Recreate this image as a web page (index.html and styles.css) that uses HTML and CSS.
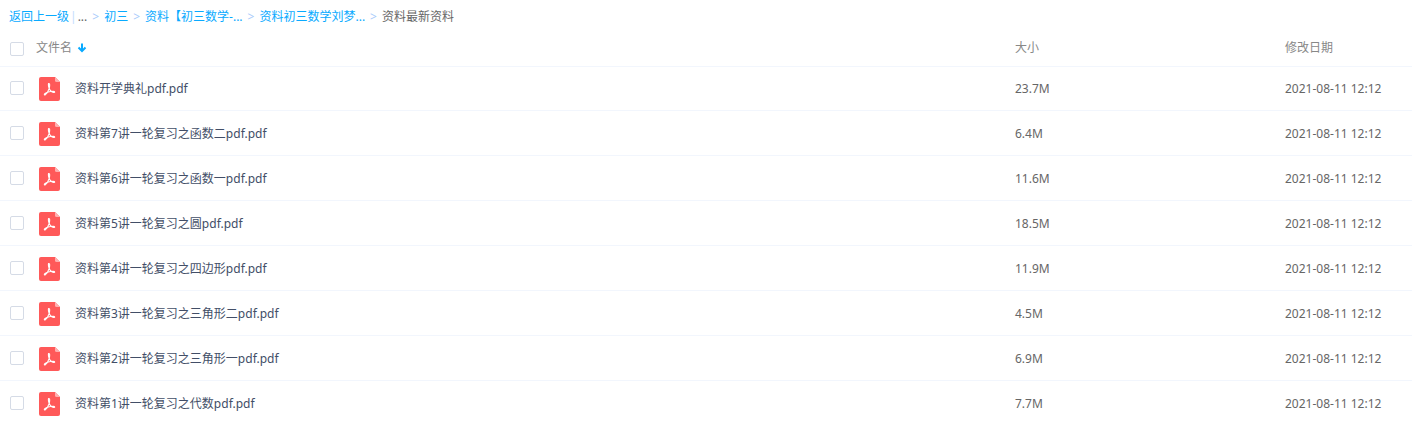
FILE: index.html
```html
<!DOCTYPE html>
<html lang="zh-CN">
<head>
    <meta charset="UTF-8">
    <meta name="viewport" content="width=device-width, initial-scale=1.0">
    <title>资料最新资料</title>
    <link rel="stylesheet" href="styles.css">
</head>
<body>

    <!-- PDF icon shared by all rows -->
    <svg class="sprite" width="0" height="0" aria-hidden="true">
        <symbol id="pdf" viewBox="0 0 21 24">
            <path fill="#ff5959" d="M2 0H16L21 5V22a2 2 0 0 1-2 2H2a2 2 0 0 1-2-2V2a2 2 0 0 1 2-2z"/>
            <path fill="#ffb0b0" d="M16 0L21 5H17.500a1.500 1.500 0 0 1-1.500-1.500z"/>
            <path fill="none" stroke="#fff" stroke-width="1.100" stroke-linecap="round" stroke-linejoin="round" d="M9.700 6.500C11 6.300 10.800 9 10.200 11.300C9.300 14 7.700 16.700 6.200 17.900C5.300 18.300 5 17.300 5.800 16.600C7.800 15 11.500 14.300 14.200 14.200C16.200 14.300 16 15.700 14.700 15.500C12.500 15.100 10.600 12.800 9.900 10.600C9.400 8.800 9.100 7 9.700 6.500z"/>
        </symbol>
    </svg>

    <nav class="breadcrumb">
        <a href="#">返回上一级</a>
        <span class="divider">|</span>
        <span class="current">...</span>
        <span class="arrow">&gt;</span>
        <a href="#">初三</a>
        <span class="arrow">&gt;</span>
        <a href="#">资料【初三数学-...</a>
        <span class="arrow">&gt;</span>
        <a href="#">资料初三数学刘梦...</a>
        <span class="arrow">&gt;</span>
        <span class="current">资料最新资料</span>
    </nav>

    <table class="files">
        <thead>
            <tr>
                <th class="check"><input type="checkbox" id="checkAll" aria-label="全选"></th>
                <th>
                    <div class="sort">
                        文件名
                        <svg width="10" height="10" viewBox="0 0 10 10" aria-hidden="true">
                            <path fill="none" stroke="#09aaff" stroke-width="2" d="M5 0.500V8M1.500 4.500L5 8L8.500 4.500"/>
                        </svg>
                    </div>
                </th>
                <th class="size">大小</th>
                <th class="date">修改日期</th>
            </tr>
        </thead>
        <tbody id="fileList">
            <!-- File rows will be inserted here -->
        </tbody>
    </table>

    <script src="script.js"></script>
</body>
</html>
```

FILE: styles.css
```css
body {
    margin: 0;
    background-color: #fff;
    color: #666;
    font-family: "Noto Sans", "Noto Sans CJK SC", sans-serif;
    font-size: 12px;
    line-height: 18px;
}
a {
    color: #09aaff;
    text-decoration: none;
}
.sprite {
    display: block;
}
.breadcrumb {
    display: flex;
    padding: 8px 9px 4px;
    white-space: nowrap;
}
.divider {
    margin: 0 1px;
    color: #c4dbfe;
}
.arrow {
    margin: 0 5px;
    color: #a9cbfb;
}
.files {
    width: 100%;
    table-layout: fixed;
    border-collapse: separate;
    border-spacing: 0;
}
th, td {
    box-sizing: border-box;
    padding: 0;
    text-align: left;
    vertical-align: middle;
    font-weight: normal;
}
th {
    height: 36px;
    color: #888;
}
td {
    height: 45px;
    padding-top: 1px;
    border-bottom: 1px solid #f2f6fd;
}
tbody tr:first-child td {
    border-top: 1px solid #f2f6fd;
}
tbody tr:last-child td {
    border-bottom-color: transparent;
}
.check {
    width: 36px;
    padding: 0 0 1px 10px;
}
th.check {
    padding: 1px 0 0 10px;
}
.size {
    width: 270px;
}
.date {
    width: 127px;
}
input[type="checkbox"] {
    appearance: none;
    display: block;
    box-sizing: border-box;
    width: 14px;
    height: 14px;
    margin: 0;
    border: 1px solid #d5dbe6;
    border-radius: 2px;
    background-color: #fff;
}
input[type="checkbox"]:checked {
    border-color: #09aaff;
    background-color: #09aaff;
}
.sort {
    display: flex;
    align-items: center;
    gap: 5px;
}
.file {
    display: flex;
    align-items: center;
    gap: 15px;
    padding-left: 3px;
    color: #424e67;
}
.file svg {
    width: 21px;
    height: 24px;
}
```

FILE: script.js
```js
const files = [
    { name: '资料开学典礼pdf.pdf', size: '23.7M' },
    { name: '资料第7讲一轮复习之函数二pdf.pdf', size: '6.4M' },
    { name: '资料第6讲一轮复习之函数一pdf.pdf', size: '11.6M' },
    { name: '资料第5讲一轮复习之圆pdf.pdf', size: '18.5M' },
    { name: '资料第4讲一轮复习之四边形pdf.pdf', size: '11.9M' },
    { name: '资料第3讲一轮复习之三角形二pdf.pdf', size: '4.5M' },
    { name: '资料第2讲一轮复习之三角形一pdf.pdf', size: '6.9M' },
    { name: '资料第1讲一轮复习之代数pdf.pdf', size: '7.7M' }
];

const fileList = document.getElementById('fileList');

fileList.innerHTML = files.map((file, i) => `
    <tr>
        <td class="check"><input type="checkbox" id="file${i}"></td>
        <td>
            <label class="file" for="file${i}">
                <svg aria-hidden="true"><use href="#pdf"/></svg>
                <span>${file.name}</span>
            </label>
        </td>
        <td>${file.size}</td>
        <td>2021-08-11 12:12</td>
    </tr>
`).join('');

// Select or clear every row
document.getElementById('checkAll').addEventListener('change', e => {
    fileList.querySelectorAll('input').forEach(box => {
        box.checked = e.target.checked;
    });
});
```
